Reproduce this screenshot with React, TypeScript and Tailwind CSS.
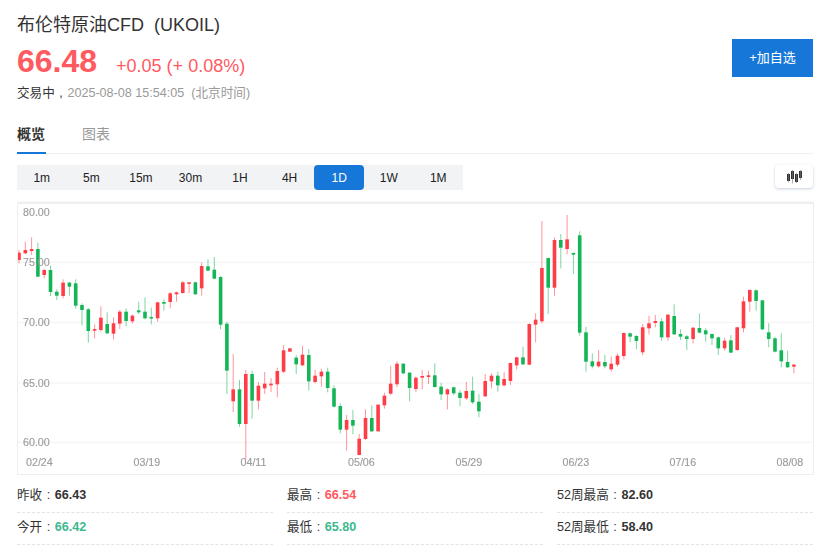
import React from 'react';

const FONT = "font-['Liberation_Sans','Noto_Sans_CJK_SC',sans-serif]";

// [wickTop, wickBottom, bodyTop, bodyBottom, up] read off the chart at 3x, y offset from 200
const candles: [number, number, number, number, number][] = [
  [150,190,158,180,1],[125,162,150,160,1],[112,165,147,153,1],[128,232,147,230,0],[207,235,210,225,1],
  [197,288,210,276,0],[268,300,275,287,0],[238,295,248,288,1],[245,287,248,260,0],[238,326,250,317,0],
  [310,376,315,330,0],[324,428,328,393,0],[373,415,387,392,1],[319,395,353,390,1],[337,402,372,400,0],
  [352,418,370,401,1],[330,387,335,371,1],[325,379,335,363,0],[343,371,347,364,1],[305,342,331,337,0],
  [292,358,335,355,0],[323,373,351,355,0],[305,365,307,355,1],[298,332,306,311,0],[276,325,280,306,1],
  [275,305,277,283,1],[243,281,247,279,1],[246,279,247,249,1],[245,284,247,283,0],[187,287,198,265,1],
  [178,213,199,212,0],[171,238,209,236,0],[228,388,231,374,0],[365,582,371,512,0],[462,636,568,604,1],
  [540,680,568,672,0],[510,780,522,672,1],[512,656,522,602,0],[546,628,557,602,1],[516,582,551,565,1],
  [534,576,551,556,1],[503,592,513,553,1],[435,520,451,515,1],[445,455,445,455,1],[465,522,473,493,0],
  [437,497,464,496,1],[447,572,465,544,0],[510,550,527,546,1],[506,560,515,529,1],[503,577,515,564,0],
  [556,622,565,620,0],[610,700,618,689,0],[645,752,660,689,1],[630,703,660,677,0],[702,765,716,765,1],
  [628,720,654,717,1],[616,696,654,694,0],[613,695,614,694,1],[578,626,587,616,1],[497,585,551,581,1],
  [484,562,491,553,1],[490,523,491,520,0],[517,604,518,564,0],[530,577,533,567,1],[510,568,528,533,1],
  [512,552,526,531,1],[490,563,526,561,0],[548,600,560,583,0],[565,628,568,583,1],[560,585,562,580,0],
  [570,619,578,594,0],[546,600,573,595,1],[530,612,572,607,0],[582,652,605,634,0],[522,590,543,589,1],
  [520,565,527,544,1],[515,575,527,556,0],[517,560,537,556,1],[488,555,489,543,1],[470,508,472,496,1],
  [440,495,472,493,0],[370,495,372,494,1],[340,427,359,374,1],[63,370,204,364,1],[173,342,174,263,0],
  [112,287,120,263,1],[102,205,120,143,0],[45,163,118,147,1],[157,222,159,164,0],[94,407,106,398,0],
  [380,515,397,485,0],[460,505,484,499,0],[450,503,485,499,1],[465,505,486,499,0],[470,515,491,508,1],
  [460,500,467,494,1],[398,478,399,468,1],[397,427,400,410,0],[405,448,408,423,0],[372,466,382,457,1],
  [347,403,370,385,1],[345,382,363,369,1],[355,422,364,412,0],[343,422,344,412,1],[313,405,348,403,0],
  [388,420,402,410,0],[405,450,409,417,0],[382,430,383,417,1],[340,400,384,398,0],[385,425,391,403,0],
  [400,435,402,415,0],[410,465,412,445,0],[413,452,422,445,1],[405,458,421,458,0],[380,452,382,450,1],
  [290,397,304,385,1],[268,335,270,305,1],[268,332,271,303,0],[300,390,301,388,0],[370,442,397,417,0],
  [410,457,415,455,0],[400,502,451,484,0],[452,503,486,502,0],[492,520,494,500,1],
];

const frames = ['1m', '5m', '15m', '30m', '1H', '4H', '1D', '1W', '1M'];
const grid = [58.3, 118.3, 179, 238.3];
const yLabels = [['80.00', 8], ['75.00', 58], ['70.00', 118.5], ['65.00', 179], ['60.00', 238.5]] as const;
const xLabels = [['02/24', 8], ['03/19', 115.5], ['04/11', 222.5], ['05/06', 330], ['05/29', 437.5], ['06/23', 544.5], ['07/16', 651.5], ['08/08', 758.5]] as const;

function CandleChart() {
  return (
    <svg width="795" height="270" viewBox="0 0 795 270" className="block blur-[0.3px]">
      {grid.map((y) => (
        <line key={y} x1="0" x2="795" y1={y} y2={y} stroke="#f2f2f2" strokeWidth="1" />
      ))}
      {candles.map(([wt, wb, bt, bb, up], i) => {
        const x = 1 + 6.3 * i;
        const color = up ? '#ff3d47' : '#14b556';
        return (
          <g key={i} fill={color}>
            <rect x={x - 0.5} y={wt / 3 - 4} width="1" height={(wb - wt) / 3} opacity="0.55" />
            <rect x={x - 1.8} y={bt / 3 - 4} width="3.6" height={Math.max((bb - bt) / 3, 1.5)} />
          </g>
        );
      })}
      {yLabels.map(([t, y]) => (
        <text key={t} x="5" y={y} dy="3.8" fontSize="10.7" fontWeight="500" fill="#9c9c9c" stroke="#9c9c9c" strokeWidth="0.15" fontFamily="Liberation Sans, sans-serif">{t}</text>
      ))}
      {xLabels.map(([t, x]) => (
        <text key={t} x={x} y="262" fontSize="10.7" fill="#9c9c9c" stroke="#9c9c9c" strokeWidth="0.15" fontFamily="Liberation Sans, sans-serif">{t}</text>
      ))}
    </svg>
  );
}

function Stat({ label, value, tone }: { label: string; value: string; tone?: string }) {
  return (
    <div className="h-[32px] pb-[2px] flex items-center border-b border-dashed border-[#e3e3e3] text-[12.6px] text-[#333]">
      <span>{label}</span>
      <span className="w-[12.6px] text-center">:</span>
      <span className={`font-bold ${tone ?? 'text-[#333]'}`}>{value}</span>
    </div>
  );
}

export default function App() {
  return (
    <div className={`w-[824px] h-[552px] overflow-hidden bg-white pl-[17px] pr-[11px] pt-[13px] ${FONT}`}>
      <div className="flex justify-between">
        <div>
          <h1 className="text-[18px] leading-[25px] text-[#333]">布伦特原油CFD&nbsp;&nbsp;(UKOIL)</h1>
          <div className="flex items-baseline mt-[4px] h-[38px]">
            <span className="text-[32px] leading-[38px] font-bold text-[#ff5a5f]">66.48</span>
            <span className="ml-[19px] text-[18px] text-[#ff5a5f]">+0.05 (+ 0.08%)</span>
          </div>
          <div className="text-[12.6px] leading-[17px] mt-[5px] text-[#999]">
            <span className="text-[#333]">交易中</span>
            <span className="inline-block w-[12.6px] text-center text-[#333]">,</span>
            2025-08-08 15:54:05&nbsp;&nbsp;(北京时间)
          </div>
        </div>
        <button className="mt-[26px] w-[81px] h-[38px] bg-[#1677d9] text-white text-[13px]">+加自选</button>
      </div>

      <div className="flex mt-[22px] h-[30px] border-b border-[#f0f0f0] text-sm leading-[20px]">
        <div className="w-[29px] h-[30px] border-b-2 border-[#1677d9] font-bold text-[#333]">概览</div>
        <div className="ml-[36px] text-[#999]">图表</div>
      </div>

      <div className="flex justify-between items-start mt-[11px]">
        <div className="flex w-[446px] h-[25px] bg-[#f1f3f5] text-xs">
          {frames.map((f) => (
            <div
              key={f}
              className={`flex-1 flex items-center justify-center rounded-sm ${f === '1D' ? 'bg-[#1677d9] text-white' : 'text-[#222]'}`}
            >
              {f}
            </div>
          ))}
        </div>
        <div className="w-[38px] h-[23px] flex items-center justify-center rounded-sm bg-white shadow-[0_1px_3px_rgba(80,100,160,0.3)]">
          <svg width="16" height="14" viewBox="0 0 16 14" fill="#333">
            <path d="M1 4h3v7H1zM5 1h3v8H5zM9 4h3v8H9zM13 1h3v7h-3z" />
            <path d="M2.2 3h.6v9.5h-.6zM6.2 0h.6v13.5h-.6zM10.2 3h.6v10h-.6zM14.2 0h.6v10h-.6z" fill="#777" />
          </svg>
        </div>
      </div>

      <div className="mt-[13px] w-[797px] h-[272px] border border-[#eeeeee] shadow-[0_-2px_0_-0.5px_#f0f0f0] overflow-hidden">
        <CandleChart />
      </div>

      <div className="grid grid-cols-3 gap-x-[14px] mt-[6px] w-[796px]">
        <Stat label="昨收" value="66.43" />
        <Stat label="最高" value="66.54" tone="text-[#ff5a5f]" />
        <Stat label="52周最高" value="82.60" />
        <Stat label="今开" value="66.42" tone="text-[#3cb98f]" />
        <Stat label="最低" value="65.80" tone="text-[#3cb98f]" />
        <Stat label="52周最低" value="58.40" />
      </div>
    </div>
  );
}
